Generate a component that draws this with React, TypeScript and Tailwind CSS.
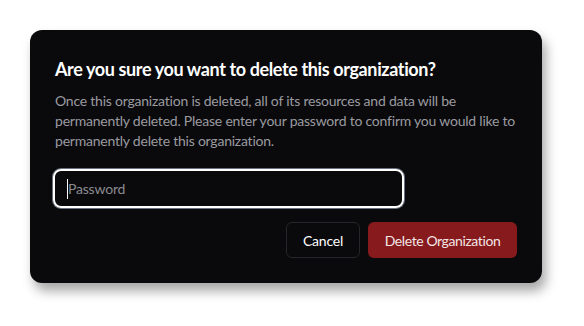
import React from 'react';

const App: React.FC = () => {
  return (
    <div className="w-[584px] h-[326px] bg-white pt-[30px] pl-[30px]" style={{ fontFamily: 'Lato, "Noto Sans", sans-serif' }}>
      <div className="w-[512px] h-[253px] rounded-xl bg-[#0a0a0c] px-[25px] pt-[26px] shadow-[4px_8px_12px_rgba(0,0,0,0.35)]">
        <h2 className="text-[18px] leading-[26px] font-bold text-white tracking-[-0.38px]">
          Are you sure you want to delete this organization?
        </h2>
        <p className="mt-[9px] text-[14px] leading-[20px] text-[#9a9aa0] tracking-[-0.22px]">
          Once this organization is deleted, all of its resources and data will be permanently deleted. Please enter your password to confirm you would like to permanently delete this organization.
        </p>
        <div className="mt-[18px] -ml-[2px] w-[351px] h-[39px] rounded-lg border-2 border-white ring-1 ring-gray-500 flex items-center pl-3">
          <span className="w-px h-[20px] bg-white" />
          <span className="text-[14px] text-[#8a8a90] tracking-[-0.2px]">Password</span>
        </div>
        <div className="mt-[14px] flex justify-end gap-2 pr-0">
          <button className="h-[36px] w-[74px] rounded-md border border-[#26262a] bg-[#0a0a0c] text-[14px] text-white tracking-[-0.2px]">
            Cancel
          </button>
          <button className="h-[36px] w-[149px] rounded-md bg-[#861a1d] text-[14px] text-[#f3e6e6] tracking-[-0.4px]">
            Delete Organization
          </button>
        </div>
      </div>
    </div>
  );
};

export default App;
